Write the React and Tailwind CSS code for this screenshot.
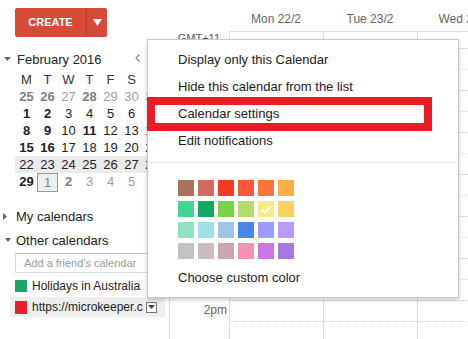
import React from "react";

const swatches = [
  ["bg-[#ac725e]", "bg-[#d06b64]", "bg-[#f83a22]", "bg-[#fa573c]", "bg-[#ff7537]", "bg-[#ffad46]"],
  ["bg-[#42d692]", "bg-[#16a765]", "bg-[#7bd148]", "bg-[#b3dc6c]", "bg-[#fbe983]", "bg-[#fad165]"],
  ["bg-[#92e1c0]", "bg-[#9fe1e7]", "bg-[#9fc6e7]", "bg-[#4986e7]", "bg-[#9a9cff]", "bg-[#b99aff]"],
  ["bg-[#c2c2c2]", "bg-[#cabdbf]", "bg-[#cca6ac]", "bg-[#f691b2]", "bg-[#cd74e6]", "bg-[#a47ae2]"],
];

// o: other month, b: bold, x: boxed (today)
const weeks = [
  [
    { d: 25, o: 1, b: 1 }, { d: 26, o: 1, b: 1 }, { d: 27, o: 1 }, { d: 28, o: 1, b: 1 },
    { d: 29, o: 1 }, { d: 30, o: 1 }, { d: 31, o: 1 },
  ],
  [{ d: 1, b: 1 }, { d: 2, b: 1 }, { d: 3 }, { d: 4 }, { d: 5 }, { d: 6 }, { d: 7 }],
  [{ d: 8, b: 1 }, { d: 9, b: 1 }, { d: 10 }, { d: 11, b: 1 }, { d: 12 }, { d: 13 }, { d: 14 }],
  [{ d: 15, b: 1 }, { d: 16, b: 1 }, { d: 17 }, { d: 18 }, { d: 19 }, { d: 20 }, { d: 21 }],
  [{ d: 22 }, { d: 23 }, { d: 24 }, { d: 25 }, { d: 26 }, { d: 27 }, { d: 28 }],
  [
    { d: 29, b: 1 }, { d: 1, o: 1, x: 1 }, { d: 2, o: 1, b: 1 }, { d: 3, o: 1 },
    { d: 4, o: 1 }, { d: 5, o: 1 }, { d: 6, o: 1 },
  ],
];

function dayClass(c) {
  if (c.o && c.b) return "font-bold text-[#808080]";
  if (c.o) return "text-[#a0a0a0]";
  if (c.b) return "font-bold text-[#222]";
  return "text-[#222]";
}

function Sidebar() {
  return (
    <div className="flex w-[169px] shrink-0 flex-col">
      <div className="pl-[15px] pt-[8px]">
        <div className="flex h-[29px] w-[92px] rounded-[2px] bg-[#d84a38] text-white">
          <div className="flex w-[71px] items-center justify-center text-[11px] font-bold leading-none">
            CREATE
          </div>
          <div className="w-px bg-[#b83c2c]" />
          <div className="flex flex-1 items-center justify-center">
            <svg width="9" height="7" viewBox="0 0 9 7">
              <path d="M0 0h9L4.5 7z" fill="#fff" />
            </svg>
          </div>
        </div>
      </div>

      <div className="mt-[13px] flex h-[18px] items-center">
        <svg className="ml-[4px]" width="7" height="4" viewBox="0 0 7 4">
          <path d="M0 0h7L3.5 4z" fill="#666" />
        </svg>
        <span className="ml-[6px] text-[13px] leading-none text-[#222]">February 2016</span>
        <div className="flex-1" />
        <svg className="mb-[3px] mr-[29px]" width="5" height="8" viewBox="0 0 5 8">
          <path d="M4.5 0.5L1 4l3.5 3.5" fill="none" stroke="#888" strokeWidth="1.2" />
        </svg>
      </div>

      <div className="ml-[16px] mt-[3px] flex h-[17px] items-center text-[13px] text-[#333]">
        {["M", "T", "W", "T", "F", "S", "S"].map((l, i) => (
          <div key={i} className="w-[21px] shrink-0 text-center leading-[17px]">
            {l}
          </div>
        ))}
      </div>

      {weeks.map((w, wi) => (
        <div
          key={wi}
          className={
            "ml-[15px] flex w-[150px] pl-[1px] text-[13px] " +
            (wi === 4 ? "bg-[#ebebeb] " : "") +
            (wi === 5 ? "h-[19px]" : "h-[17px]")
          }
        >
          {w.map((c, ci) =>
            c.x ? (
              <div
                key={ci}
                className="flex h-[19px] w-[21px] shrink-0 items-center justify-center border border-[#999] bg-[#eee] text-[#808080]"
              >
                {c.d}
              </div>
            ) : (
              <div
                key={ci}
                className={"w-[21px] shrink-0 text-center leading-[17px] " + dayClass(c)}
              >
                {c.d}
              </div>
            )
          )}
        </div>
      ))}

      <div className="mt-[12px] flex h-[24px] items-center">
        <svg className="ml-[3px]" width="4" height="7" viewBox="0 0 4 7">
          <path d="M0 0v7l4-3.5z" fill="#666" />
        </svg>
        <span className="ml-[9px] text-[13px] leading-none text-[#222]">My calendars</span>
      </div>
      <div className="flex h-[24px] items-center">
        <svg className="ml-[5px]" width="6" height="4" viewBox="0 0 6 4">
          <path d="M0 0h6L3 4z" fill="#666" />
        </svg>
        <span className="ml-[5px] text-[13px] leading-none text-[#222]">Other calendars</span>
      </div>
      <div className="ml-[15px] mt-[1px] flex h-[20px] w-[160px] items-center border border-[#d9d9d9] border-t-[#c0c0c0] pl-[8px] text-[11px] text-[#999]">
        Add a friend's calendar
      </div>
      <div className="ml-[10px] mt-[3px] flex h-[20px] w-[155px] items-center pl-[5px]">
        <div className="h-[12px] w-[12px] shrink-0 bg-[#16a765]" />
        <span className="ml-[5px] whitespace-nowrap text-[12px] leading-none text-[#222]">
          Holidays in Australia
        </span>
      </div>
      <div className="ml-[10px] mt-[1px] flex h-[20px] w-[155px] items-center bg-[#eee] pl-[5px]">
        <div className="h-[13px] w-[12px] shrink-0 bg-[#e8202a]" />
        <span className="ml-[5px] w-[111px] shrink-0 overflow-hidden whitespace-nowrap text-[12px] leading-[16px] text-[#222]">
          https://microkeeper.com.au
        </span>
        <div className="ml-[3px] flex h-[11px] w-[11px] shrink-0 items-center justify-center border border-[#777] bg-[#f8f8f8]">
          <svg width="7" height="4" viewBox="0 0 7 4">
            <path d="M0 0h7L3.5 4z" fill="#444" />
          </svg>
        </div>
      </div>
    </div>
  );
}

function Main() {
  const hours = ["8am", "9am", "10am", "11am", "12pm", "1pm", "2pm"];
  const days = ["Mon 22/2", "Tue 23/2", "Wed 24/2"];
  return (
    <div className="flex min-w-0 flex-1 flex-col overflow-hidden">
      <div className="flex h-[31px] shrink-0">
        <div className="w-[60px] shrink-0" />
        {days.map((d) => (
          <div
            key={d}
            className="w-[94px] shrink-0 whitespace-nowrap pt-[12px] text-center text-[12px] leading-[14px] text-[#666]"
          >
            {d}
          </div>
        ))}
      </div>
      <div className="flex h-[18px] shrink-0">
        <div className="w-[60px] shrink-0 pr-[9px] pt-[1px] text-right text-[11px] leading-[12px] text-[#555]">
          GMT+11
        </div>
        {days.map((d) => (
          <div key={d} className="w-[94px] shrink-0 border-y border-l border-[#ddd]" />
        ))}
      </div>
      <div className="flex">
        <div className="w-[60px] shrink-0 border-l border-[#ddd]">
          {hours.map((h) => (
            <div
              key={h}
              className="h-[42px] pr-[2px] pt-[2px] text-right text-[12px] leading-[14px] text-[#666]"
            >
              {h}
            </div>
          ))}
        </div>
        {days.map((d) => (
          <div key={d} className="w-[94px] shrink-0 border-l border-[#ddd]">
            {hours.map((h) => (
              <div key={h} className="h-[42px] border-b border-[#ddd]">
                <div className="h-[21px] border-b border-dotted border-[#d6d6d6]" />
              </div>
            ))}
          </div>
        ))}
      </div>
    </div>
  );
}

function Menu() {
  const items = [
    "Display only this Calendar",
    "Hide this calendar from the list",
    "Calendar settings",
    "Edit notifications",
  ];
  return (
    <div className="absolute left-[147px] top-[39px] w-[312px] border border-[#c8c8c8] bg-white py-[6px] text-[13px] text-[#222] shadow-[0_2px_4px_rgba(0,0,0,0.2)]">
      {items.map((t) => (
        <div key={t} className="flex h-[27px] items-center whitespace-nowrap pl-[30px]">
          {t}
        </div>
      ))}
      <div className="mt-[8px] h-px bg-[#e5e5e5]" />
      <div className="mt-[17px] flex flex-col gap-[5px] pl-[30px]">
        {swatches.map((row, ri) => (
          <div key={ri} className="flex gap-[4px]">
            {row.map((c, ci) => (
              <div key={ci} className={"flex h-[16px] w-[16px] items-center justify-center " + c}>
                {ri === 1 && ci === 4 ? (
                  <svg width="11" height="9" viewBox="0 0 11 9">
                    <path d="M1 4.5l3 3L10 1.5" fill="none" stroke="#fff" strokeWidth="2" />
                  </svg>
                ) : null}
              </div>
            ))}
          </div>
        ))}
      </div>
      <div className="mt-[5px] flex h-[27px] items-center pl-[30px]">Choose custom color</div>
    </div>
  );
}

export default function App() {
  return (
    <div className="relative flex h-[339px] w-[468px] overflow-hidden bg-white font-['Liberation_Sans',Arial,sans-serif] text-[#222]">
      <Sidebar />
      <Main />
      <Menu />
      <div className="absolute left-[147px] top-[97px] h-[34px] w-[285px] border-[8px] border-[#ed1c24]" />
    </div>
  );
}
